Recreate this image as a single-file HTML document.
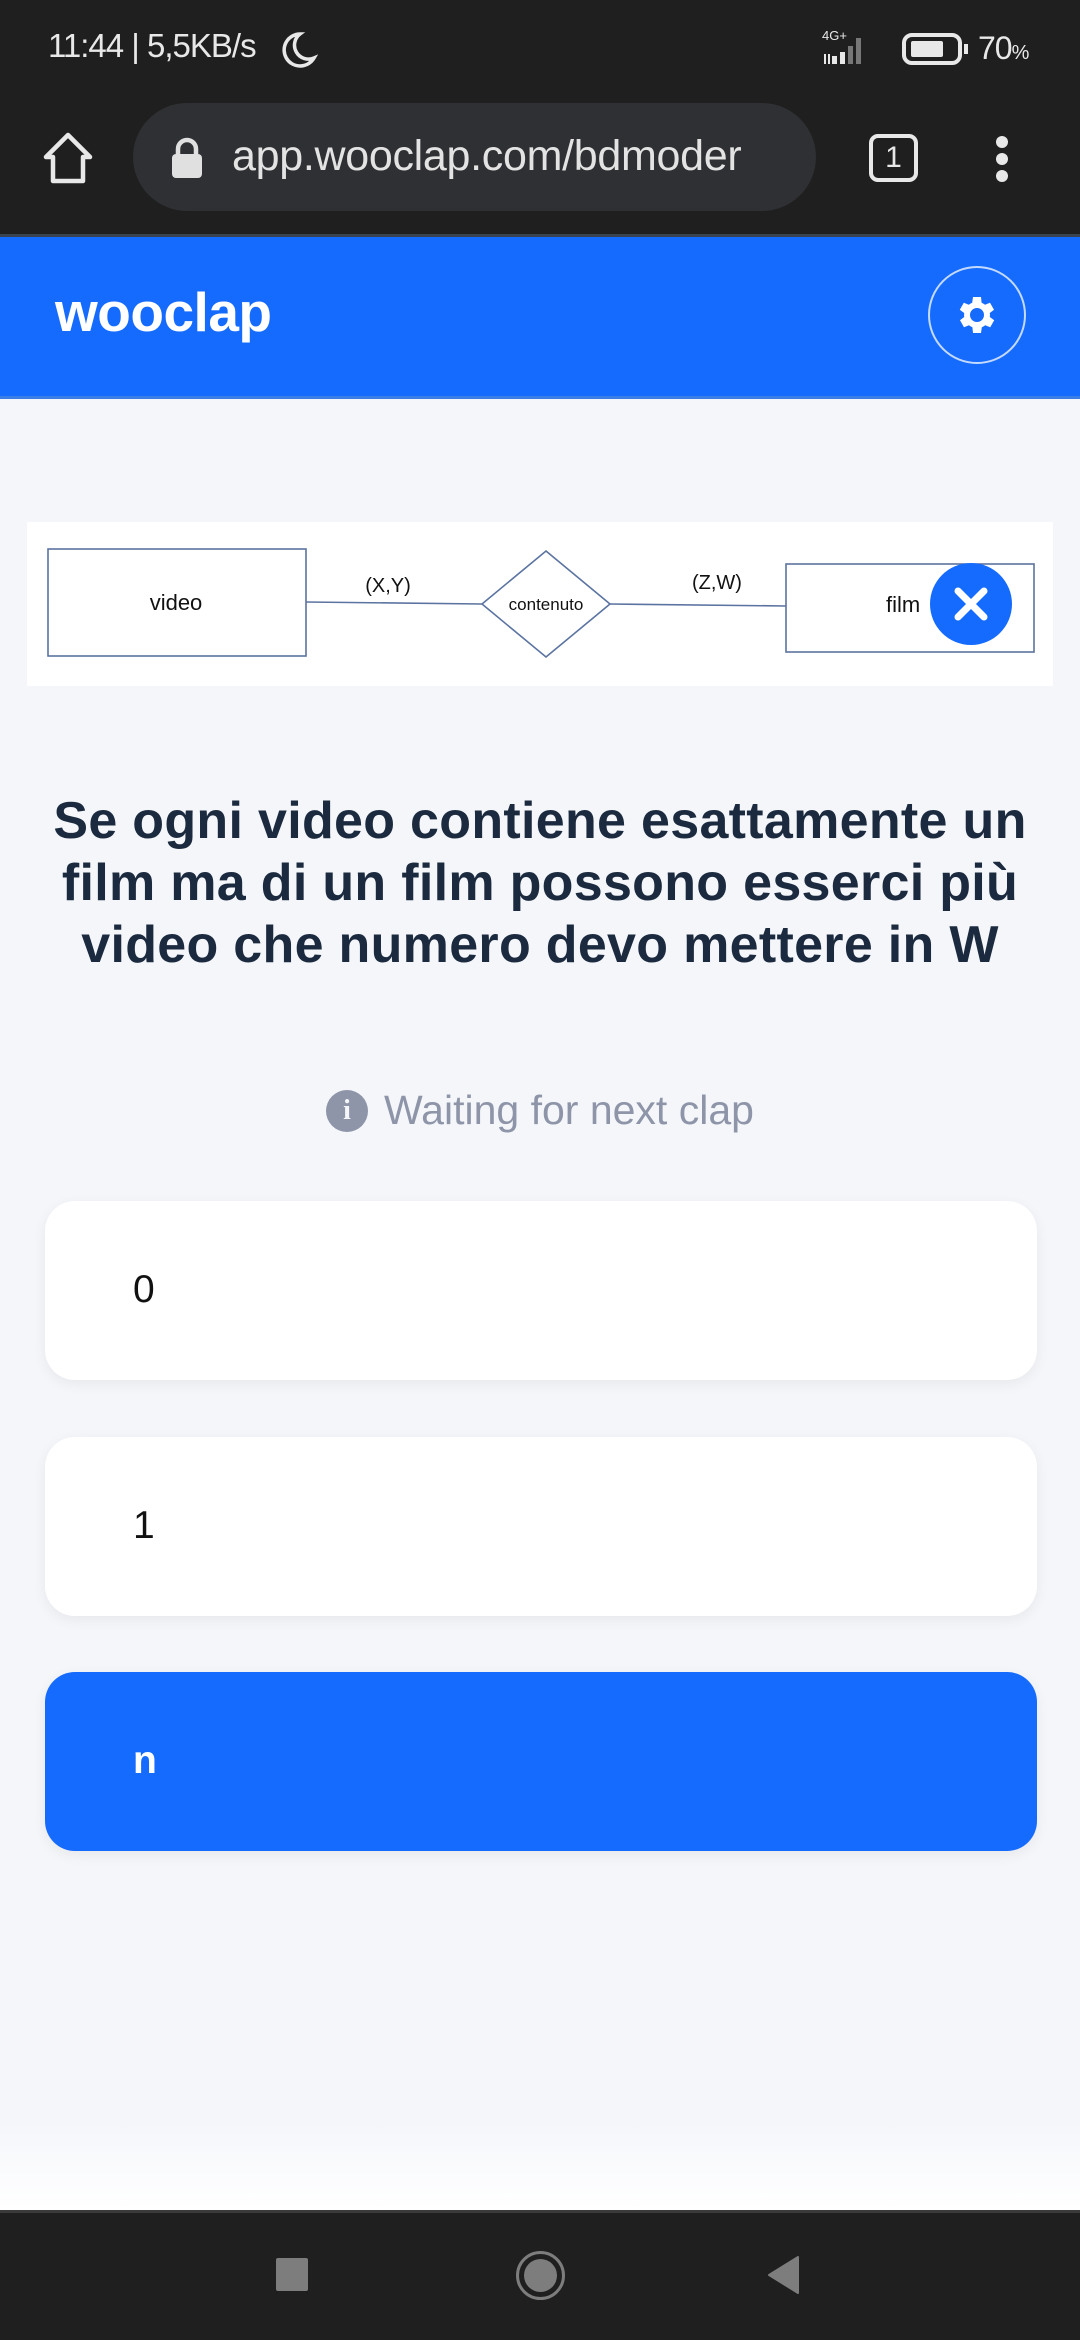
<!DOCTYPE html>
<html><head><meta charset="utf-8"><style>
*{margin:0;padding:0;box-sizing:border-box}
body{width:1080px;height:2340px;position:relative;overflow:hidden;background:#f4f6fa;font-family:"Liberation Sans",sans-serif}
.abs{position:absolute}
</style></head><body>
<div class="abs" style="left:0;top:0;width:1080px;height:234px;background:#1f1f1f"></div>
<div class="abs" style="left:48px;top:27px;color:#e8e8e8;font-size:33px;letter-spacing:-1px">11:44 | 5,5KB/s</div>
<svg class="abs" style="left:278px;top:30px" width="40" height="40" viewBox="0 0 40 40"><path d="M22 4 A16 16 0 1 0 36 28 A14 14 0 0 1 22 4Z" fill="none" stroke="#e8e8e8" stroke-width="3.5"/></svg>
<div class="abs" style="left:822px;top:28px;color:#e8e8e8;font-size:13px">4G+</div>
<svg class="abs" style="left:822px;top:32px" width="70" height="36"><rect x="10" y="24" width="5" height="8" fill="#e8e8e8"/><rect x="18" y="20" width="5" height="12" fill="#e8e8e8"/><rect x="26" y="14" width="5" height="18" fill="#777"/><rect x="34" y="6" width="5" height="26" fill="#777"/><path d="M3 22v10M7 22v10" stroke="#e8e8e8" stroke-width="2"/></svg>
<svg class="abs" style="left:902px;top:32px" width="70" height="36"><rect x="2" y="3" width="56" height="28" rx="8" fill="none" stroke="#e8e8e8" stroke-width="4"/><rect x="9" y="9" width="32" height="16" rx="2" fill="#e8e8e8"/><rect x="62" y="12" width="4" height="10" fill="#e8e8e8"/></svg>
<div class="abs" style="left:978px;top:30px;color:#e8e8e8;font-size:32px;letter-spacing:-1px">70<span style="font-size:20px">%</span></div>
<svg class="abs" style="left:40px;top:130px" width="56" height="56" viewBox="0 0 56 56"><path d="M28 5 L50 27 H43 V51 H13 V27 H6 Z" fill="none" stroke="#e8e8e8" stroke-width="4.5" stroke-linejoin="round"/></svg>
<div class="abs" style="left:133px;top:103px;width:683px;height:108px;border-radius:54px;background:#2f3033"></div>
<svg class="abs" style="left:170px;top:137px" width="34" height="42"><path d="M8 18V12a9 9 0 0 1 18 0v6" fill="none" stroke="#e0e0e0" stroke-width="4.5"/><rect x="2" y="17" width="30" height="24" rx="4" fill="#e0e0e0"/></svg>
<div class="abs" style="left:232px;top:132px;color:#e3e3e3;font-size:43px;letter-spacing:-0.3px">app.wooclap.com/bdmoder</div>
<div class="abs" style="left:869px;top:134px;width:49px;height:48px;border:4.5px solid #e8e8e8;border-radius:9px;color:#e8e8e8;font-size:30px;text-align:center;line-height:40px">1</div>
<div class="abs" style="left:996px;top:136px;width:12px;height:12px;border-radius:6px;background:#e8e8e8"></div>
<div class="abs" style="left:996px;top:153px;width:12px;height:12px;border-radius:6px;background:#e8e8e8"></div>
<div class="abs" style="left:996px;top:170px;width:12px;height:12px;border-radius:6px;background:#e8e8e8"></div>
<div class="abs" style="left:0;top:234px;width:1080px;height:3px;background:#3a4350"></div>
<div class="abs" style="left:0;top:237px;width:1080px;height:161px;background:#166bff"></div>
<div class="abs" style="left:0;top:396px;width:1080px;height:3px;background:#3d7de8"></div>
<div class="abs" style="left:55px;top:280px;color:#fff;font-size:55px;font-weight:bold;letter-spacing:-0.5px">wooclap</div>
<div class="abs" style="left:928px;top:266px;width:98px;height:98px;border-radius:50%;border:2px solid rgba(255,255,255,0.75)"></div>
<svg class="abs" style="left:953px;top:291px" width="48" height="48" viewBox="0 0 24 24"><path fill="#fff" d="M19.4 13a7.5 7.5 0 0 0 0-2l2.1-1.6-2-3.5-2.5 1a7 7 0 0 0-1.7-1L15 3h-4l-.4 2.9a7 7 0 0 0-1.7 1l-2.5-1-2 3.5L6.6 11a7.5 7.5 0 0 0 0 2l-2.1 1.6 2 3.5 2.5-1a7 7 0 0 0 1.7 1L11 21h4l.4-2.9a7 7 0 0 0 1.7-1l2.5 1 2-3.5zM13 15.5a3.5 3.5 0 1 1 0-7 3.5 3.5 0 0 1 0 7z" transform="translate(-1 0)"/></svg>
<div class="abs" style="left:27px;top:522px;width:1026px;height:164px;background:#fff"></div>
<svg class="abs" style="left:0;top:500px" width="1080" height="220">
<g fill="none" stroke="#5b73a0" stroke-width="1.6">
<rect x="48" y="49" width="258" height="107"/>
<path d="M306 102 L482 104"/>
<path d="M546 51 L610 104 L546 157 L482 104 Z"/>
<path d="M610 104 L786 106"/>
<rect x="786" y="64" width="248" height="88"/>
</g>
<g font-family="Liberation Sans,sans-serif" fill="#111">
<text x="176" y="110" font-size="22" text-anchor="middle">video</text>
<text x="546" y="110" font-size="17" text-anchor="middle">contenuto</text>
<text x="388" y="92" font-size="20" text-anchor="middle">(X,Y)</text>
<text x="717" y="89" font-size="20" text-anchor="middle">(Z,W)</text>
<text x="886" y="112" font-size="22">film</text>
</g>
<circle cx="971" cy="104" r="41" fill="#166bff"/>
<path d="M958 91 L984 117 M984 91 L958 117" stroke="#fff" stroke-width="7" stroke-linecap="round"/>
</svg>
<div class="abs" style="left:0;top:790px;width:1080px;text-align:center;color:#1b2a3f;font-size:52px;font-weight:bold;line-height:62px;letter-spacing:0.3px">Se ogni video contiene esattamente un<br>film ma di un film possono esserci più<br>video che numero devo mettere in W</div>
<div class="abs" style="left:326px;top:1090px;width:42px;height:42px;border-radius:50%;background:#8e95a8;color:#f4f6fa;font-size:28px;font-weight:bold;text-align:center;line-height:42px;font-family:'Liberation Serif',serif">i</div>
<div class="abs" style="left:384px;top:1087px;color:#8e95a8;font-size:41px">Waiting for next clap</div>
<div class="abs" style="left:45px;top:1201px;width:992px;height:179px;border-radius:30px;background:#fff;box-shadow:0 4px 14px rgba(0,0,0,0.06)"></div>
<div class="abs" style="left:133px;top:1268px;color:#111;font-size:39px">0</div>
<div class="abs" style="left:45px;top:1437px;width:992px;height:179px;border-radius:30px;background:#fff;box-shadow:0 4px 14px rgba(0,0,0,0.06)"></div>
<div class="abs" style="left:133px;top:1504px;color:#111;font-size:39px">1</div>
<div class="abs" style="left:45px;top:1672px;width:992px;height:179px;border-radius:30px;background:#166bff;box-shadow:0 4px 14px rgba(0,0,0,0.06)"></div>
<div class="abs" style="left:133px;top:1739px;color:#fff;font-size:39px;font-weight:bold">n</div>
<div class="abs" style="left:0;top:2120px;width:1080px;height:90px;background:linear-gradient(#f4f6fa,#fff)"></div>
<div class="abs" style="left:0;top:2210px;width:1080px;height:3px;background:#3a3a3a"></div>
<div class="abs" style="left:0;top:2213px;width:1080px;height:127px;background:#1f1f1f"></div>
<div class="abs" style="left:276px;top:2258px;width:32px;height:33px;border-radius:2px;background:#7d7d7d"></div>
<div class="abs" style="left:516px;top:2251px;width:49px;height:49px;border-radius:50%;border:3px solid #7d7d7d"></div>
<div class="abs" style="left:524px;top:2259px;width:33px;height:33px;border-radius:50%;background:#7d7d7d"></div>
<svg class="abs" style="left:766px;top:2255px" width="36" height="40"><path d="M32 2 V38 L3 20 Z" fill="#7d7d7d" stroke="#7d7d7d" stroke-linejoin="round" stroke-width="2"/></svg>
</body></html>
